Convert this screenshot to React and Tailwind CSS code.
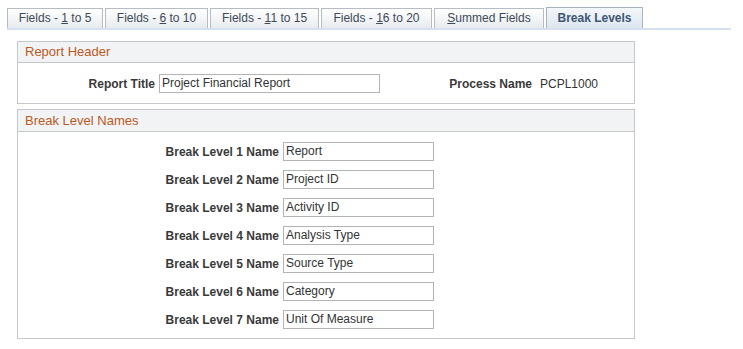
import React from "react";

const tabs = [
  { pre: "Fields - ", u: "1", post: " to 5", w: "w-[96px]" },
  { pre: "Fields - ", u: "6", post: " to 10", w: "w-[103px]" },
  { pre: "Fields - ", u: "1", post: "1 to 15", w: "w-[109px]" },
  { pre: "Fields - ", u: "1", post: "6 to 20", w: "w-[111px]" },
  { pre: "", u: "S", post: "ummed Fields", w: "w-[110px]" },
];

const levels = [
  "Report",
  "Project ID",
  "Activity ID",
  "Analysis Type",
  "Source Type",
  "Category",
  "Unit Of Measure",
];

function Field({ value, w }) {
  return (
    <div
      className={`${w} h-[19px] border border-[#b4b4b4] bg-white pl-[2px] text-[12px] leading-[17px] text-[#333333]`}
    >
      {value}
    </div>
  );
}

export default function App() {
  return (
    <div
      className="w-[743px] h-[349px] bg-white overflow-hidden"
      style={{ fontFamily: '"Liberation Sans", Arial, sans-serif' }}
    >
      <div className="pl-[7px] pt-[7px]">
        <div className="flex items-end gap-[2px] h-[21px]">
          {tabs.map((t, i) => (
            <div
              key={i}
              className={`${t.w} h-[20px] border border-b-0 border-[#b5bcc4] bg-gradient-to-b from-white to-[#e8ebee] text-center text-[12px] leading-[19px] text-[#3d4a5a]`}
            >
              {t.pre}
              <span className="underline">{t.u}</span>
              {t.post}
            </div>
          ))}
          <div className="w-[97px] h-[21px] border border-b-0 border-[#a9b3bf] bg-gradient-to-b from-[#f4f7fa] to-[#dde6f0] text-center text-[12px] font-bold leading-[20px] text-[#3f5672]">
            Break Levels
          </div>
        </div>
        <div className="w-[724px] h-[2px] bg-[#d5e1ef]"></div>
      </div>

      <div className="ml-[17px] mt-[11px] w-[618px] border border-[#c5c9ce]">
        <div className="h-[21px] border-b border-[#c5c9ce] bg-[#f1f3f5] pl-[7px] text-[13px] leading-[20px] text-[#bb5a1c]">
          Report Header
        </div>
        <div className="flex items-center pt-[11px] pb-[10px] text-[12px]">
          <div className="w-[137px] text-right font-bold text-[#3a3a3a]">
            Report Title
          </div>
          <div className="ml-[4px]">
            <Field value="Project Financial Report" w="w-[221px]" />
          </div>
          <div className="w-[152px] text-right font-bold text-[#3a3a3a]">
            Process Name
          </div>
          <div className="ml-[8px] text-[#333333]">PCPL1000</div>
        </div>
      </div>

      <div className="ml-[17px] mt-[5px] w-[618px] border border-[#c5c9ce]">
        <div className="h-[22px] border-b border-[#c5c9ce] bg-[#f1f3f5] pl-[7px] text-[13px] leading-[21px] text-[#bb5a1c]">
          Break Level Names
        </div>
        <div className="flex flex-col gap-[9px] pt-[10px] pb-[9px] text-[12px]">
          {levels.map((v, i) => (
            <div key={i} className="flex items-center">
              <div className="w-[261px] text-right font-bold text-[#3a3a3a]">
                Break Level {i + 1} Name
              </div>
              <div className="ml-[4px]">
                <Field value={v} w="w-[151px]" />
              </div>
            </div>
          ))}
        </div>
      </div>
    </div>
  );
}
